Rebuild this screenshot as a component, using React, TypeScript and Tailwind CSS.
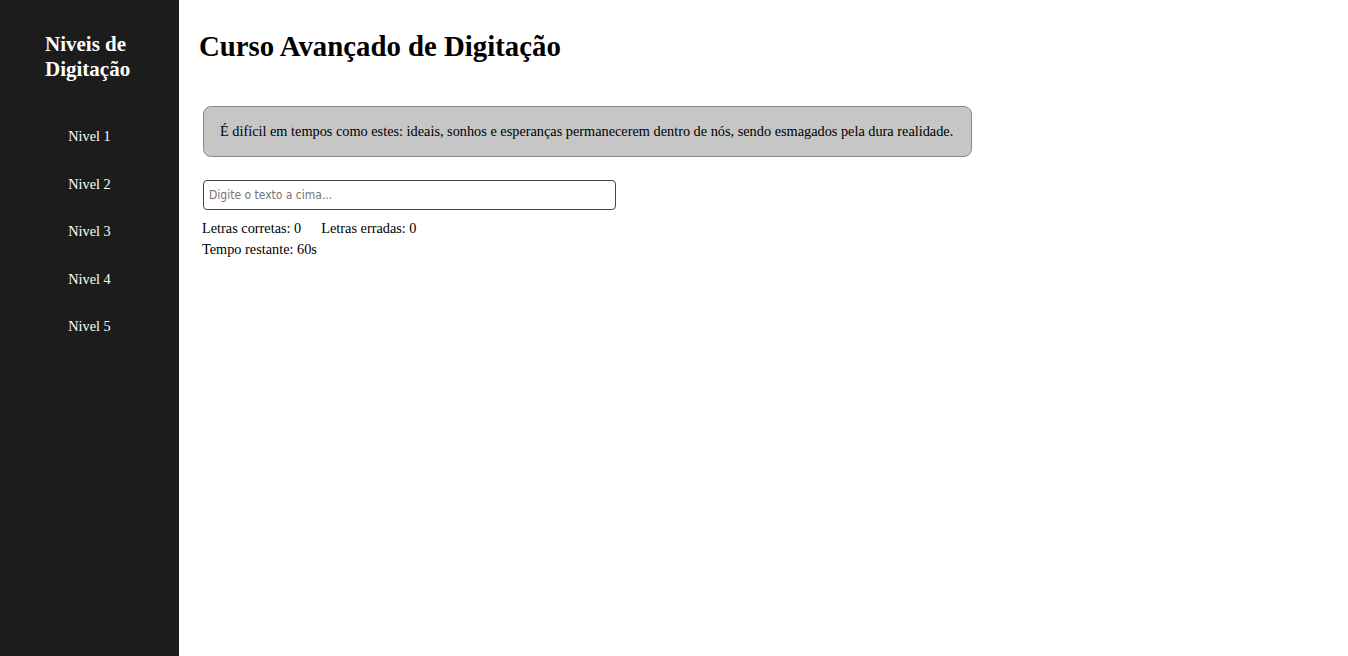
import React, { useState } from 'react'

const levels = ['Nivel 1', 'Nivel 2', 'Nivel 3', 'Nivel 4', 'Nivel 5']

const App: React.FC = () => {
  const [typed, setTyped] = useState('')

  return (
    <div className="flex h-[656px] w-full font-['Liberation_Serif',serif] text-black">
      {/* Sidebar */}
      <aside className="w-[179px] shrink-0 bg-[#1c1c1c] text-white">
        <h2 className="pl-[45px] pr-4 pt-[32px] text-[21px] font-bold leading-[25px]">
          Niveis de Digitação
        </h2>
        <ul className="mt-[46px] flex flex-col gap-[31px] text-center text-[14.3px] leading-[16.5px]">
          {levels.map((level) => (
            <li key={level}>{level}</li>
          ))}
        </ul>
      </aside>

      {/* Main */}
      <main className="flex-1 pl-5 pt-[30px]">
        <h1 className="text-[28.8px] font-bold leading-[33px]">Curso Avançado de Digitação</h1>

        <div className="ml-1 mt-[43px] w-[769px] rounded-lg border border-[#8a8a8a] bg-[#c6c6c6] px-4 py-[16px] text-[14.3px] leading-[17px]">
          É difícil em tempos como estes: ideais, sonhos e esperanças permanecerem dentro de nós, sendo esmagados pela dura realidade.
        </div>

        <input
          type="text"
          value={typed}
          onChange={(e) => setTyped(e.target.value)}
          placeholder="Digite o texto a cima..."
          className="ml-1 mt-[23px] block h-[30px] w-[413px] rounded border border-[#444] px-[5px] font-['DejaVu_Sans_Condensed','DejaVu_Sans',sans-serif] text-[12px] placeholder:text-[#757575] focus:outline-none"
        />

        <div className="mt-[10px] flex flex-col gap-[4px] pl-[3px] text-[14.3px] leading-[16.5px]">
          <div className="flex gap-[20px]">
            <span>Letras corretas: 0</span>
            <span>Letras erradas: 0</span>
          </div>
          <span>Tempo restante: 60s</span>
        </div>
      </main>
    </div>
  )
}

export default App
